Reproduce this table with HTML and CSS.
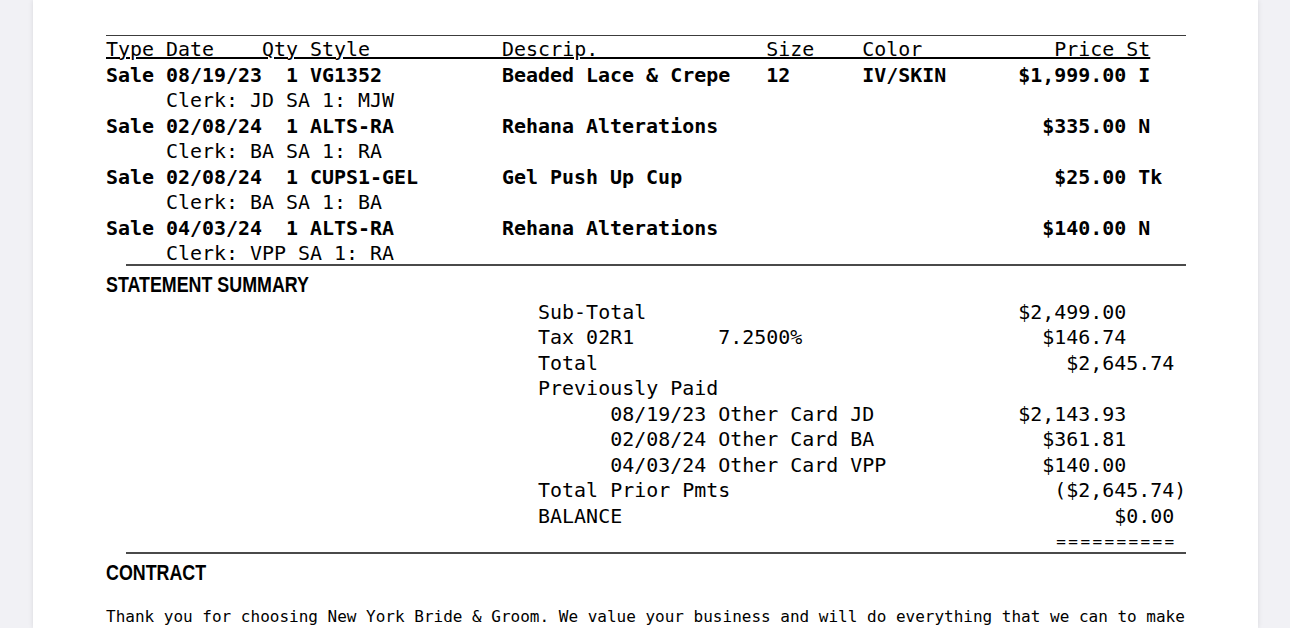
FILE: index.html
```html
<!DOCTYPE html>
<html lang="en">
<head>
<meta charset="utf-8">
<title>Statement</title>
<link rel="stylesheet" href="styles.css">
</head>
<body>
<div class="viewer">
  <main class="page">
    <section class="items">
      <div class="items-head">Type Date    Qty Style           Descrip.              Size    Color           Price St</div>

      <div class="item">
        <span>Sale</span><span>08/19/23</span><span class="qty">1</span><span></span><span>VG1352</span><span>Beaded Lace &amp; Crepe</span><span>12</span><span>IV/SKIN</span><span class="price">$1,999.00</span><span></span><span>I</span>
      </div>
      <div class="clerk">Clerk: JD SA 1: MJW</div>

      <div class="item">
        <span>Sale</span><span>02/08/24</span><span class="qty">1</span><span></span><span>ALTS-RA</span><span>Rehana Alterations</span><span></span><span></span><span class="price">$335.00</span><span></span><span>N</span>
      </div>
      <div class="clerk">Clerk: BA SA 1: RA</div>

      <div class="item">
        <span>Sale</span><span>02/08/24</span><span class="qty">1</span><span></span><span>CUPS1-GEL</span><span>Gel Push Up Cup</span><span></span><span></span><span class="price">$25.00</span><span></span><span>Tk</span>
      </div>
      <div class="clerk">Clerk: BA SA 1: BA</div>

      <div class="item">
        <span>Sale</span><span>04/03/24</span><span class="qty">1</span><span></span><span>ALTS-RA</span><span>Rehana Alterations</span><span></span><span></span><span class="price">$140.00</span><span></span><span>N</span>
      </div>
      <div class="clerk">Clerk: VPP SA 1: RA</div>
    </section>

    <section class="summary">
      <h2 class="section-title">STATEMENT SUMMARY</h2>
      <div class="sum-row"><span class="label">Sub-Total</span><span class="amt amt-a">$2,499.00</span></div>
      <div class="sum-row"><span class="label short">Tax 02R1</span><span class="rate">7.2500%</span><span class="amt amt-a">$146.74</span></div>
      <div class="sum-row"><span class="label">Total</span><span class="amt amt-b">$2,645.74</span></div>
      <div class="sum-row"><span class="label">Previously Paid</span></div>
      <div class="sum-row"><span class="label sub">08/19/23 Other Card JD</span><span class="amt amt-a">$2,143.93</span></div>
      <div class="sum-row"><span class="label sub">02/08/24 Other Card BA</span><span class="amt amt-a">$361.81</span></div>
      <div class="sum-row"><span class="label sub">04/03/24 Other Card VPP</span><span class="amt amt-a">$140.00</span></div>
      <div class="sum-row"><span class="label">Total Prior Pmts</span><span class="amt">($2,645.74)</span></div>
      <div class="sum-row"><span class="label">BALANCE</span><span class="amt amt-b">$0.00</span></div>
      <div class="sum-row"><span class="amt amt-b equals">==========</span></div>
    </section>

    <section class="contract">
      <h2 class="section-title">CONTRACT</h2>
      <p class="contract-text">Thank you for choosing New York Bride &amp; Groom. We value your business and will do everything that we can to make</p>
    </section>
  </main>
</div>
</body>
</html>
```

FILE: styles.css
```css
html, body {
  margin: 0;
  padding: 0;
  height: 100%;
  overflow: hidden;
  background: #f1f1f5;
}

.viewer {
  display: flex;
  justify-content: flex-start;
  padding-left: 33px;
  height: 100%;
}

.page {
  width: 1225px;
  height: 100%;
  box-sizing: border-box;
  background: #ffffff;
  box-shadow: 0 0 5px rgba(0, 0, 0, 0.10);
  padding: 35px 0 0 73px;
  color: #000;
  font-family: "DejaVu Sans Mono", "Liberation Mono", monospace;
  font-size: 19.96px;
  line-height: 25.5px;
}

.items,
.summary {
  width: 90ch;
  display: flex;
  flex-direction: column;
}

.items::after,
.summary::after {
  content: "";
  display: block;
  height: 2px;
  margin-left: 20px;
  margin-top: -3px;
  background: #4a4a4a;
}

.items-head {
  white-space: pre;
  padding-top: 1px;
  border-top: 1.5px solid #3c3c3c;
  text-decoration: underline;
  text-decoration-thickness: 1.5px;
  text-underline-offset: 1px;
}

.item {
  display: grid;
  grid-template-columns: 5ch 8ch 3ch 1ch 16ch 22ch 8ch 12ch 10ch 1ch 3ch;
  font-weight: bold;
  white-space: nowrap;
}

.item .qty,
.item .price {
  text-align: right;
}

.clerk {
  padding-left: 5ch;
  white-space: pre;
}

.section-title {
  margin: 7px 0 0;
  font-family: "Liberation Sans", Arial, sans-serif;
  font-size: 21.5px;
  font-weight: bold;
  line-height: 25.5px;
  white-space: nowrap;
  transform: scaleX(0.83);
  transform-origin: left center;
}

.summary .section-title {
  margin-bottom: 1.5px;
}

.sum-row {
  display: grid;
  grid-template-columns: 36ch 15ch 25ch 14ch;
  height: 25.5px;
  white-space: pre;
}

.sum-row .label {
  grid-column: 2 / 4;
}

.sum-row .label.short {
  grid-column: 2 / 3;
}

.sum-row .label.sub {
  padding-left: 6ch;
}

.sum-row .rate {
  grid-column: 3 / 4;
}

.sum-row .amt {
  grid-column: 4 / 5;
  text-align: right;
}

.sum-row .amt-a {
  padding-right: 5ch;
}

.sum-row .amt-b {
  padding-right: 1ch;
}

.equals {
  font-size: 16px;
  letter-spacing: 2.4px;
}

.contract-text {
  margin: 21px 0 0;
  font-size: 16px;
  line-height: 20px;
  white-space: nowrap;
}
```
